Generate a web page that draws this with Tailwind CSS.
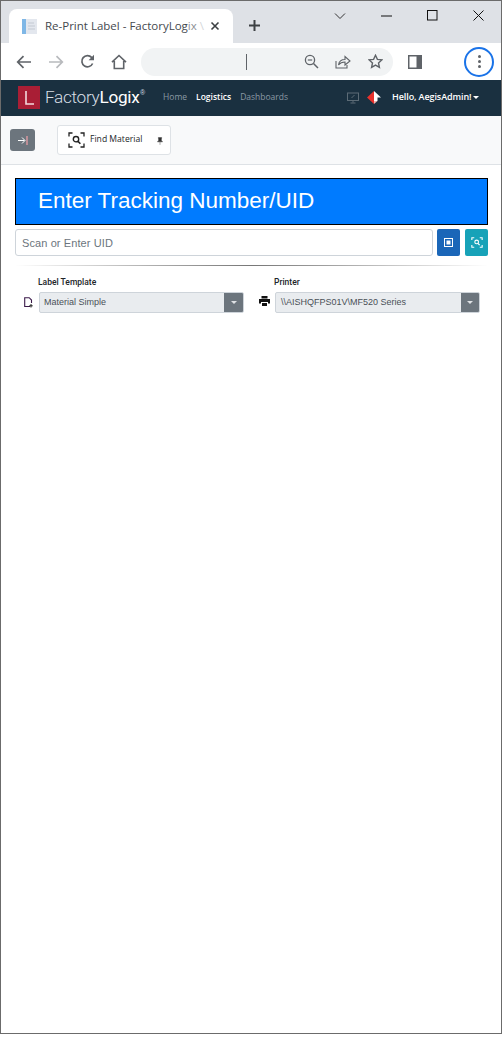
<!DOCTYPE html>
<html lang="en">
<head>
<meta charset="UTF-8">
<title>Re-Print Label - FactoryLogix</title>
<script src="https://cdn.jsdelivr.net/npm/@tailwindcss/browser@4"></script>
</head>
<body class="bg-white font-['Liberation_Sans',Arial,sans-serif]">
<div class="w-[502px] h-[1034px] border border-[#6b6b6b] flex flex-col overflow-hidden">

  <!-- chrome tabs -->
  <div class="h-[42px] bg-[#dee1e6] flex shrink-0 pl-[8px] pt-[8px] relative">
    <div class="w-[224px] h-[34px] bg-white rounded-t-lg flex items-center pl-[13px] font-['Open_Sans',sans-serif]">
      <svg class="shrink-0" width="16" height="17" viewBox="0 0 16 17"><rect x="0" y="1" width="15" height="15" fill="#e3e7ee"/><rect x="0" y="1" width="4" height="15" fill="#7fb7e6"/><path d="M6 5h6M6 8h7M6 11h7" stroke="#c3c9d2" stroke-width="1"/></svg>
      <span class="ml-[7px] w-[158px] shrink-0 text-[11.5px] text-[#45494e] whitespace-nowrap">Re-Print Label - FactoryLog<span class="text-[#8d9094]">ix</span> <span class="text-[#d5d7da]">\</span></span>
      <svg class="ml-[7px] shrink-0" width="10" height="10" viewBox="0 0 10 10"><path d="M1.5 1.5l7 7M8.5 1.5l-7 7" stroke="#3c4043" stroke-width="1.6"/></svg>
    </div>
    <svg class="ml-[15px] mt-[10px]" width="13" height="13" viewBox="0 0 13 13"><path d="M6.5 1v11M1 6.5h11" stroke="#3c4043" stroke-width="2"/></svg>
    <!-- window controls -->
    <div class="ml-auto flex items-center h-[14px] -mt-[1px] mr-[17px] gap-[35px] pt-[1px]">
      <svg width="12" height="8" viewBox="0 0 12 8"><path d="M1 1.5l5 5 5-5" fill="none" stroke="#333" stroke-width="1"/></svg>
      <svg width="11" height="2" viewBox="0 0 11 2"><path d="M0 1h11" stroke="#111" stroke-width="1"/></svg>
      <svg width="11" height="11" viewBox="0 0 11 11"><rect x=".5" y=".5" width="9.5" height="9.5" fill="none" stroke="#111" stroke-width="1"/></svg>
      <svg width="11" height="11" viewBox="0 0 11 11"><path d="M.5.5l10 10M10.5.5l-10 10" stroke="#111" stroke-width="1"/></svg>
    </div>
  </div>

  <!-- chrome toolbar -->
  <div class="h-[37px] bg-white flex items-center shrink-0 pl-[15px]">
    <svg width="16" height="14" viewBox="0 0 16 14"><path d="M15 7H2M7.5 1.2L1.7 7l5.8 5.8" fill="none" stroke="#5f6368" stroke-width="1.7"/></svg>
    <svg class="ml-[16px]" width="16" height="14" viewBox="0 0 16 14"><path d="M1 7h13M8.5 1.2L14.3 7l-5.8 5.8" fill="none" stroke="#b8babd" stroke-width="1.7"/></svg>
    <svg class="ml-[16px]" width="15" height="15" viewBox="0 0 15 15"><path d="M12.6 9.5A5.6 5.6 0 1 1 11.6 3.4L13.3 5" fill="none" stroke="#5f6368" stroke-width="1.7"/><path d="M14 .8v5.4H8.6z" fill="#5f6368"/></svg>
    <svg class="ml-[16px]" width="16" height="16" viewBox="0 0 16 16"><path d="M1 8.2L8 1.5l7 6.7M3.3 7v7.5h9.4V7" fill="none" stroke="#5f6368" stroke-width="1.6"/></svg>
    <div class="ml-[14px] w-[252px] h-[28px] rounded-full bg-[#f1f3f4] flex items-center pl-[105px]">
      <div class="w-px h-[16px] bg-[#5f6368]"></div>
      <svg class="ml-[57px]" width="15" height="15" viewBox="0 0 15 15"><circle cx="6" cy="6" r="4.6" fill="none" stroke="#5f6368" stroke-width="1.3"/><path d="M9.5 9.5l4.5 4.5" stroke="#5f6368" stroke-width="1.5"/><path d="M3.8 6h4.4" stroke="#5f6368" stroke-width="1.2"/></svg>
      <svg class="ml-[16px]" width="16" height="15" viewBox="0 0 16 15"><path d="M1 7v7h11v-3" fill="none" stroke="#5f6368" stroke-width="1.1"/><path d="M3.5 11c.5-3.5 3-5.5 6.5-5.5V2.5l5 4.5-5 4V8C7.5 8 5 9 3.5 11z" fill="none" stroke="#5f6368" stroke-width="1.1"/></svg>
      <svg class="ml-[17px]" width="15" height="15" viewBox="0 0 15 15"><path d="M7.5 1.3l1.9 4.1 4.4.5-3.3 3 .9 4.5-3.9-2.3-3.9 2.3.9-4.5-3.3-3 4.4-.5z" fill="none" stroke="#5f6368" stroke-width="1.4"/></svg>
    </div>
    <svg class="ml-[15px]" width="14" height="14" viewBox="0 0 14 14"><rect width="14" height="14" fill="#5f6368"/><rect x="1.5" y="1.5" width="7" height="11" fill="#fff"/></svg>
    <div class="ml-[42px] w-[30px] h-[30px] rounded-full border-2 border-[#1a73e8] flex flex-col items-center justify-center gap-[2px]">
      <span class="w-[3px] h-[3px] rounded-full bg-[#5f6368]"></span>
      <span class="w-[3px] h-[3px] rounded-full bg-[#5f6368]"></span>
      <span class="w-[3px] h-[3px] rounded-full bg-[#5f6368]"></span>
    </div>
  </div>

  <!-- app navbar -->
  <nav class="h-[36px] bg-[#1a3040] flex items-center shrink-0 pl-[17px] pb-[1px]">
    <div class="w-[22px] h-[23px] bg-[#a91e35] flex items-center justify-center">
      <svg width="12" height="16" viewBox="0 0 12 16"><path d="M3 1v13h8" fill="none" stroke="#f3d9dc" stroke-width="1.6"/></svg>
    </div>
    <span class="ml-[5px] w-[95px] whitespace-nowrap text-[17.2px] leading-none text-[#d8dfe5] font-['Roboto',sans-serif] font-light tracking-[-0.3px]">Factory<span class="font-normal text-white">Logix</span></span>
    <span class="w-[5px] text-[7px] text-[#d8dfe5] -mt-[8px]">®</span>
    <a class="ml-[18px] -mt-px text-[8.5px] font-['Open_Sans',sans-serif] text-[#8b9aa5]">Home</a>
    <a class="ml-[9px] -mt-px text-[8.5px] font-['Open_Sans',sans-serif] font-semibold text-white">Logistics</a>
    <a class="ml-[9px] -mt-px text-[8.5px] font-['Open_Sans',sans-serif] text-[#8b9aa5]">Dashboards</a>
    <svg class="ml-[59px]" width="12" height="12" viewBox="0 0 12 12"><rect x=".5" y="1" width="11" height="7.5" fill="none" stroke="#5c6b76"/><path d="M6 8.5v2M3.5 11h5M4.5 6l3-3" stroke="#5c6b76"/></svg>
    <svg class="ml-[8px]" width="15" height="13" viewBox="0 0 15 13"><path d="M7 0L0 6.5 7 13z" fill="#e8312c"/><path d="M7 0l7 6.5h-3.5V10H7z" fill="#fff"/><path d="M7 10h3.5L7 13z" fill="#f3b3ae"/></svg>
    <span class="ml-[10px] -mt-px text-[9px] font-['Open_Sans',sans-serif] font-semibold text-white tracking-[-0.1px]">Hello, AegisAdmin!</span>
    <span class="ml-[2px] -mt-px w-0 h-0 border-x-[3px] border-x-transparent border-t-[3px] border-t-white"></span>
  </nav>

  <!-- page toolbar -->
  <div class="h-[49px] bg-[#f8f9fa] border-b border-[#dee2e6] flex items-start shrink-0 pl-[9px] pt-[9px]">
    <button class="mt-[4px] w-[25px] h-[22px] bg-[#6c757d] rounded-[3px] flex items-center justify-center">
      <svg width="10" height="9" viewBox="0 0 10 9"><path d="M0 4.5h6.5M4 1.5l3 3-3 3" fill="none" stroke="#fff" stroke-width="1"/><path d="M9 0v9" stroke="#f3a0a8" stroke-width="1.2"/></svg>
    </button>
    <div class="ml-[22px] w-[114px] h-[30px] bg-white border border-[#dee2e6] rounded-[3px] flex items-center pl-[10px]">
      <svg width="17" height="16" viewBox="0 0 17 16"><path d="M1 4.5V1h3.5M12.5 1H16v3.5M16 11.5V15h-3.5M4.5 15H1v-3.5" fill="none" stroke="#222" stroke-width="1.3"/><circle cx="8" cy="7.2" r="2.7" fill="none" stroke="#222" stroke-width="1.4"/><path d="M10 9.4l2.4 2.4" stroke="#222" stroke-width="1.5"/></svg>
      <span class="ml-[5px] -mt-[2px] text-[8.6px] text-[#212529] font-['Open_Sans',sans-serif]">Find Material</span>
      <svg class="ml-[15px] mt-[2px]" width="6" height="8" viewBox="0 0 7 9"><path d="M1.5.5h4L5 3.5l1.5 2h-6L2 3.5zM3.5 5.5V9" fill="#333" stroke="#333" stroke-width=".5"/></svg>
    </div>
  </div>

  <!-- main -->
  <main class="flex-1 bg-white pl-[14px] pr-[13px] pt-[13px]">
    <h1 class="h-[47px] bg-[#007bff] border border-black flex items-center pl-[22px] pb-[1px] text-[22.5px] text-white font-['Liberation_Sans',sans-serif]">Enter Tracking Number/UID</h1>
    <div class="mt-[4px] flex">
      <input class="w-[418px] h-[27px] border border-[#ced4da] rounded-[3px] bg-white px-[6px] text-[11px] text-[#495057] tracking-[0.1px] placeholder:text-[#6c757d] font-['Liberation_Sans',sans-serif] outline-none" placeholder="Scan or Enter UID">
      <button class="ml-[4px] w-[23px] h-[27px] bg-[#1a66b8] rounded-[2px] flex items-center justify-center">
        <svg width="9" height="9" viewBox="0 0 9 9"><rect x=".5" y=".5" width="8" height="8" fill="none" stroke="#fff"/><rect x="2.5" y="2.5" width="4" height="4" fill="#fff"/></svg>
      </button>
      <button class="ml-[5px] w-[23px] h-[27px] bg-[#17a2b8] rounded-[2px] flex items-center justify-center">
        <svg width="12" height="11" viewBox="0 0 17 16"><path d="M1 4.5V1h3.5M12.5 1H16v3.5M16 11.5V15h-3.5M4.5 15H1v-3.5" fill="none" stroke="#fff" stroke-width="1.6"/><circle cx="8" cy="7.2" r="2.7" fill="none" stroke="#fff" stroke-width="1.6"/><path d="M10 9.4l2.4 2.4" stroke="#fff" stroke-width="1.7"/></svg>
      </button>
    </div>
    <div class="mt-[9px] h-px bg-gradient-to-r from-white via-[#777] to-white"></div>

    <div class="mt-[10px] flex text-[#212529]">
      <div class="w-[230px] flex">
        <svg class="ml-[9px] mt-[21px] shrink-0" width="9" height="11" viewBox="0 0 9 11"><path d="M6 9.5H.7V.7h4.5L7.5 3v3" fill="none" stroke="#3b1a4a" stroke-width="1.1"/><path d="M7 7v3.5M5.3 8.8h3.4" stroke="#222" stroke-width="1"/></svg>
        <div class="ml-[6px] w-[205px]">
          <div class="h-[12px] text-[8.5px] leading-[12px] font-medium font-['Roboto',sans-serif] -ml-px">Label Template</div>
          <div class="mt-[4px] h-[21px] w-[205px] bg-[#e9ecef] border border-[#ced4da] rounded-[2px] flex items-center pl-[4px] text-[9px] text-[#495057] font-['Liberation_Sans',sans-serif] overflow-hidden">
            <span class="flex-1 pt-[1px]">Material Simple</span>
            <span class="w-[19px] h-[19px] bg-[#6c757d] flex items-center justify-center"><span class="w-0 h-0 border-x-[3px] border-x-transparent border-t-[3px] border-t-[#dfe2e5]"></span></span>
          </div>
        </div>
      </div>
      <div class="flex">
        <svg class="ml-[14px] mt-[20px] shrink-0" width="11" height="10" viewBox="0 0 11 10"><path d="M2.5 0h6v2.5h-6zM0 3h11v4.5H9V6H2v1.5H0zM3 7h5v3H3z" fill="#111"/></svg>
        <div class="ml-[5px]">
          <div class="h-[12px] text-[8.5px] leading-[12px] font-medium font-['Roboto',sans-serif] -ml-px">Printer</div>
          <div class="mt-[4px] h-[21px] w-[205px] bg-[#e9ecef] border border-[#ced4da] rounded-[2px] flex items-center pl-[5px] text-[9px] text-[#495057] font-['Liberation_Sans',sans-serif] overflow-hidden">
            <span class="flex-1 pt-[1px]">\\AISHQFPS01V\MF520 Series</span>
            <span class="w-[18px] h-[19px] bg-[#6c757d] flex items-center justify-center"><span class="w-0 h-0 border-x-[3px] border-x-transparent border-t-[3px] border-t-[#dfe2e5]"></span></span>
          </div>
        </div>
      </div>
    </div>
  </main>
</div>
</body>
</html>
